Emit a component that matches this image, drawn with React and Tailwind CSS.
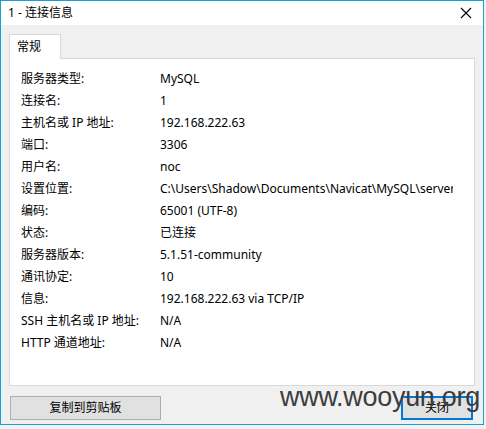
import React from "react";

const rows = [
  ["服务器类型:", "MySQL"],
  ["连接名:", "1"],
  ["主机名或 IP 地址:", "192.168.222.63"],
  ["端口:", "3306"],
  ["用户名:", "noc"],
  ["设置位置:", "C:\\Users\\Shadow\\Documents\\Navicat\\MySQL\\servers\\1"],
  ["编码:", "65001 (UTF-8)"],
  ["状态:", "已连接"],
  ["服务器版本:", "5.1.51-community"],
  ["通讯协定:", "10"],
  ["信息:", "192.168.222.63 via TCP/IP"],
  ["SSH 主机名或 IP 地址:", "N/A"],
  ["HTTP 通道地址:", "N/A"],
];

const font = { fontFamily: '"Noto Sans", "Noto Sans CJK SC", sans-serif' };

export default function App() {
  return (
    <div
      className="relative w-[486px] h-[429px] bg-[#f2f2f2] overflow-hidden text-[12px] text-black"
      style={font}
    >
      <div className="w-[484px] h-[425px] border border-[#1aa0cf] bg-[#f0f0f0] flex flex-col">
        <div className="h-[24px] bg-white flex items-center justify-between pl-[7px] pr-[10px]">
          <span className="text-[12px] leading-none">1 - 连接信息</span>
          <svg width="12" height="12" viewBox="0 0 12 12" className="mr-[1px]">
            <path d="M1 1 L11 11 M11 1 L1 11" stroke="#000" strokeWidth="1.1" />
          </svg>
        </div>
        <div className="flex-1 flex flex-col px-[8px] pt-[9px]">
          <div className="flex">
            <div className="w-[52px] h-[25px] bg-white border border-b-0 border-[#d9d9d9] pl-[7px] flex items-center -mb-[1px] relative z-10">
              <span className="leading-none">常规</span>
            </div>
          </div>
          <div className="h-[328px] bg-white border border-[#d9d9d9] pl-[11px] pt-[9px] flex flex-col">
            {rows.map(([k, v]) => (
              <div key={k} className="h-[22px] flex items-center">
                <div className="w-[139px] shrink-0 whitespace-nowrap">{k}</div>
                <div className="w-[293px] whitespace-nowrap overflow-hidden">{v}</div>
              </div>
            ))}
          </div>
          <div className="flex justify-between mt-[10px] pl-[1px] pr-[2px]">
            <button className="w-[151px] h-[24px] bg-[#e1e1e1] border border-[#adadad] flex items-center justify-center text-[12px]">
              复制到剪贴板
            </button>
            <button className="w-[72px] h-[24px] bg-[#e1e1e1] border-2 border-[#0078d7] flex items-center justify-center text-[12px]">
              关闭
            </button>
          </div>
        </div>
      </div>
      <div
        className="absolute left-[280px] top-[384px] text-[27px] leading-none text-[#3c3c3c] tracking-[-0.3px] pointer-events-none"
        style={{ fontFamily: '"Liberation Sans", Arial, sans-serif' }}
      >
        www.wooyun.org
      </div>
    </div>
  );
}
